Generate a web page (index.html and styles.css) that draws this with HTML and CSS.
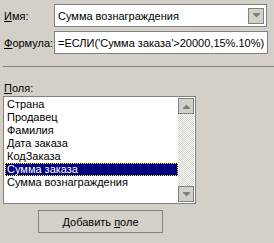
FILE: index.html
```html
<!DOCTYPE html>
<html>
<head>
    <meta charset="utf-8">
    <title>Вычисляемое поле</title>
    <link rel="stylesheet" href="styles.css">
</head>
<body>
<div class="dialog">
    <div class="field_row">
        <div class="field_label"><u>И</u>мя:</div>
        <div class="text_box name_box">
            <span class="box_text">Сумма вознаграждения</span>
            <span class="drop_btn">
                <svg width="7" height="5" viewBox="0 0 7 5"><rect x="0" y="0" width="7" height="1" fill="#808080"/><polygon points="0,1 7,1 3.5,4.5" fill="#808080"/></svg>
            </span>
        </div>
    </div>
    <div class="field_row">
        <div class="field_label"><u>Ф</u>ормула:</div>
        <div class="text_box formula_box">
            <span class="box_text">=ЕСЛИ('Сумма заказа'&gt;20000,15%.10%)</span>
        </div>
    </div>

    <div class="separator"></div>

    <div class="list_label"><u>П</u>оля:</div>
    <div class="list_box">
        <div class="list_items">
            <div class="list_item">Страна</div>
            <div class="list_item">Продавец</div>
            <div class="list_item">Фамилия</div>
            <div class="list_item">Дата заказа</div>
            <div class="list_item">КодЗаказа</div>
            <div class="list_item selected">Сумма заказа</div>
            <div class="list_item">Сумма вознаграждения</div>
        </div>
        <div class="scroll_bar">
            <div class="scroll_btn">
                <svg width="7" height="5" viewBox="0 0 7 5"><polygon points="3.5,0.5 7,4 0,4" fill="#808080"/><rect x="0" y="4" width="7" height="1" fill="#808080"/></svg>
            </div>
            <div class="scroll_track"></div>
            <div class="scroll_btn">
                <svg width="7" height="5" viewBox="0 0 7 5"><rect x="0" y="0" width="7" height="1" fill="#808080"/><polygon points="0,1 7,1 3.5,4.5" fill="#808080"/></svg>
            </div>
        </div>
    </div>

    <div class="btn_row">
        <div class="add_btn"><span>Добавить <u>п</u>оле</span></div>
    </div>
</div>
</body>
</html>
```

FILE: styles.css
```css
html, body{
    margin:0;
    padding:0;
}
body{
    background:#d4d0c8;
    font-family:"Liberation Sans", Arial, sans-serif;
    font-size:11px;
    color:#000;
}
.dialog{
    width:274px;
    height:243px;
    box-sizing:border-box;
    padding:4px 0 0 4px;
    overflow:hidden;
}
.field_row{
    display:flex;
    align-items:center;
    height:23px;
}
.field_row + .field_row{
    margin-top:4px;
}
.field_label{
    width:50px;
}
.text_box{
    height:23px;
    box-sizing:border-box;
    border:1px solid #808080;
    background:#fff;
    display:flex;
    align-items:center;
    padding-left:3px;
    white-space:nowrap;
}
.name_box{
    width:213px;
    padding-right:1px;
}
.formula_box{
    width:214px;
}
.box_text{
    flex:1;
}
.drop_btn{
    width:16px;
    height:16px;
    box-sizing:border-box;
    border:1px solid #808080;
    background:#d4d0c8;
    display:flex;
    align-items:center;
    justify-content:center;
    margin-right:1px;
}
.separator{
    margin:12px 0 0 -1px;
    height:1px;
    background:#808080;
}
.list_label{
    margin-top:14px;
    height:14px;
    line-height:14px;
}
.list_box{
    margin:1px 0 0 -1px;
    width:193px;
    height:108px;
    box-sizing:border-box;
    border:1px solid #808080;
    background:#fff;
    padding:1px;
    display:flex;
}
.list_items{
    flex:1;
}
.list_item{
    height:13px;
    line-height:13px;
    padding-left:2px;
    white-space:nowrap;
}
.list_item.selected{
    background:#000080;
    color:#fff;
    outline:1px dotted #ffff00;
    outline-offset:-1px;
}
.scroll_bar{
    width:16px;
    display:flex;
    flex-direction:column;
}
.scroll_btn{
    height:16px;
    box-sizing:border-box;
    border:1px solid #808080;
    background:#d4d0c8;
    display:flex;
    align-items:center;
    justify-content:center;
}
.scroll_track{
    flex:1;
    background-image:repeating-conic-gradient(#fff 0% 25%, #d4d0c8 0% 50%);
    background-size:2px 2px;
}
.btn_row{
    margin-top:6px;
    padding-left:34px;
}
.add_btn{
    width:125px;
    height:23px;
    box-sizing:border-box;
    border:1px solid #808080;
    display:flex;
    align-items:center;
    justify-content:center;
}
```
